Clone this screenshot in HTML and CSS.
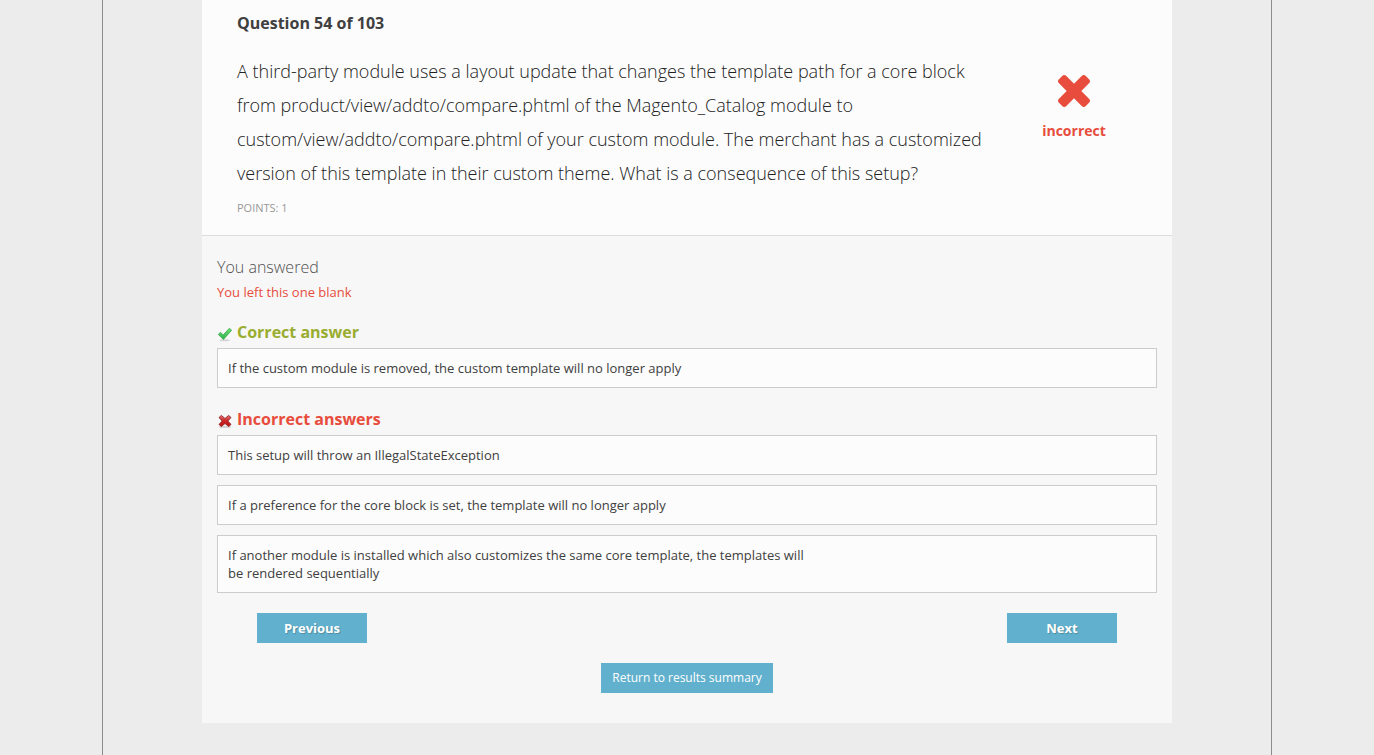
FILE: index.html
```html
<!DOCTYPE html>
<html lang="en">
<head>
<meta charset="utf-8">
<meta name="viewport" content="width=device-width, initial-scale=1">
<title>Question 54 of 103</title>
<link rel="stylesheet" href="styles.css">
</head>
<body>
<div class="frame">
  <main class="card">
    <header class="question">
      <div class="question-body">
        <h1 class="question-number">Question 54 of 103</h1>
        <p class="question-text">A third-party module uses a layout update that changes the template path for a core block from product/view/addto/compare.phtml of the Magento_Catalog module to custom/view/addto/compare.phtml of your custom module. The merchant has a customized version of this template in their custom theme. What is a consequence of this setup?</p>
        <p class="points">POINTS: 1</p>
      </div>
      <div class="verdict">
        <svg class="verdict-icon" viewBox="302 366 1188 1188" aria-hidden="true"><path fill="currentColor" d="M1490 1322q0 40-28 68l-136 136q-28 28-68 28t-68-28l-294-294-294 294q-28 28-68 28t-68-28l-136-136q-28-28-28-68t28-68l294-294-294-294q-28-28-28-68t28-68l136-136q28-28 68-28t68 28l294 294 294-294q28-28 68-28t68 28l136 136q28 28 28 68t-28 68l-294 294 294 294q28 28 28 68z"/></svg>
        <span>incorrect</span>
      </div>
    </header>
    <section class="review">
      <h2 class="answered">You answered</h2>
      <p class="blank">You left this one blank</p>

      <h2 class="group-title correct">
        <svg class="group-icon" viewBox="0 0 16 16" aria-hidden="true">
          <defs><linearGradient id="green" x1="0" y1="0" x2="0" y2="1"><stop offset="0" stop-color="#6fe36f"/><stop offset="1" stop-color="#2bb04a"/></linearGradient></defs>
          <ellipse cx="7.5" cy="14.2" rx="5" ry="1" fill="#d4d4d4"/>
          <path d="M1.3 8.4 3.5 6.3 6.2 9 12.3 2.3 14.7 4.2 6.4 13.5Z" fill="url(#green)" stroke="#38a850" stroke-width=".8" stroke-linejoin="round"/>
        </svg>
        Correct answer
      </h2>
      <ul class="answers">
        <li class="answer"><p>If the custom module is removed, the custom template will no longer apply</p></li>
      </ul>

      <h2 class="group-title wrong">
        <svg class="group-icon" viewBox="0 0 16 16" aria-hidden="true">
          <defs><linearGradient id="red" x1="0" y1="0" x2="0" y2="1"><stop offset="0" stop-color="#e87878"/><stop offset=".45" stop-color="#cc2828"/><stop offset="1" stop-color="#c00f12"/></linearGradient></defs>
          <ellipse cx="8" cy="14" rx="6.5" ry="1" fill="#d4d4d4"/>
          <path d="M4.3 2.4 8 5.5 11.7 2.4 14 4.6 10.8 8 14 11.4 11.7 13.6 8 10.5 4.3 13.6 2 11.4 5.2 8 2 4.6Z" fill="url(#red)" stroke="#8f2226" stroke-width=".9" stroke-linejoin="round"/>
        </svg>
        Incorrect answers
      </h2>
      <ul class="answers">
        <li class="answer"><p>This setup will throw an IllegalStateException</p></li>
        <li class="answer"><p>If a preference for the core block is set, the template will no longer apply</p></li>
        <li class="answer"><p>If another module is installed which also customizes the same core template, the templates will be rendered sequentially</p></li>
      </ul>

      <nav class="pager">
        <button class="button" type="button">Previous</button>
        <button class="button" type="button">Next</button>
      </nav>
      <div class="summary">
        <button class="button button-light" type="button">Return to results summary</button>
      </div>
    </section>
  </main>
</div>
</body>
</html>
```
FILE: styles.css
```css
* { box-sizing: border-box; }

body {
  margin: 0;
  background: #ececec;
  color: #404040;
  font: 13px/18px "Open Sans", "Noto Sans", sans-serif;
}

h1, h2, p, ul { margin: 0; padding: 0; }

.frame {
  max-width: 1170px;
  min-height: 100vh;
  margin: 0 auto;
  padding-bottom: 32px;
  border: solid #8c8c8c;
  border-width: 0 1px;
}

.card {
  max-width: 970px;
  margin: 0 auto;
  background: #f7f7f7;
}

.question {
  display: flex;
  align-items: center;
  padding: 10px 35px 18px;
  background: #fcfcfc;
  border-bottom: 1px solid #dcdcdc;
}

.question-body { flex: 1; }

.question-number {
  font-size: 16px;
  line-height: 26px;
  font-weight: 700;
}

.question-text {
  margin: 18px 0 9px;
  padding-right: 10px;
  color: #222;
  font-size: 18px;
  line-height: 34px;
  font-weight: 300;
}

.points {
  color: #999;
  font-size: 11px;
}

.verdict {
  display: flex;
  flex-direction: column;
  align-items: center;
  gap: 15px;
  width: 126px;
  padding-bottom: 12px;
  color: #e74c3c;
  font-size: 14px;
  font-weight: 700;
}

.verdict-icon { width: 32px; height: 32px; }

.review { padding: 19px 15px 30px; }

.answered {
  color: #505050;
  font-size: 16px;
  line-height: 24px;
  font-weight: 300;
}

.blank {
  margin: 4px 0 19px;
  color: #e74c3c;
}

.group-title {
  display: flex;
  align-items: center;
  gap: 4px;
  margin-bottom: 4px;
  font-size: 16px;
  line-height: 24px;
  font-weight: 700;
}

.group-icon {
  width: 16px;
  height: 16px;
  margin-top: 4px;
}

.correct { color: #99ad2f; }
.wrong { color: #e74c3c; }

.answers {
  display: grid;
  gap: 10px;
  margin-bottom: 19px;
  list-style: none;
}

.answer {
  padding: 10px;
  background: #fcfcfc;
  border: 1px solid #ccc;
}

.answer p { max-width: 590px; }

.pager {
  display: flex;
  justify-content: space-between;
  margin: 20px 40px;
}

.summary {
  display: flex;
  justify-content: center;
}

.button {
  min-width: 110px;
  height: 30px;
  padding: 0 11px;
  border: 0;
  background: #61b0cd;
  color: #fff;
  font: 700 13px/30px "Open Sans", "Noto Sans", sans-serif;
  text-shadow: 1px 1px 1px rgba(0, 0, 0, .2);
  cursor: pointer;
}

.button-light {
  font-size: 12px;
  font-weight: 400;
  text-shadow: none;
}
```
